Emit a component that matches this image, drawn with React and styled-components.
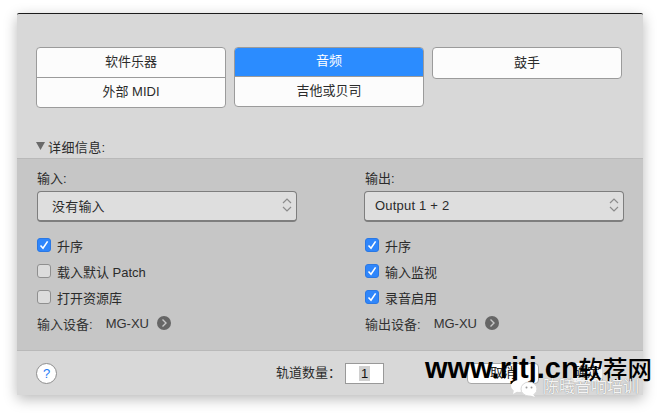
import React from 'react'
import styled, { createGlobalStyle } from 'styled-components'

const Global = createGlobalStyle`
  html, body { margin: 0; padding: 0; background: #fff; width: 660px; height: 416px; overflow: hidden; }
  * { box-sizing: border-box; }
  body { font-family: "Liberation Sans", "Noto Sans CJK SC", sans-serif; font-size: 13px; color: #2b2b2b; }
`

const Page = styled.div`
  width: 660px;
  height: 416px;
  padding: 13px 17px 21px;
`
const Win = styled.div`
  position: relative;
  width: 626px;
  height: 382px;
  display: flex;
  flex-direction: column;
  background: #d8d8d8;
  border-top: 1px solid #1c1c1c;
  border-radius: 2px;
  box-shadow: 0 4px 14px rgba(0, 0, 0, 0.28);
`
const Top = styled.div`
  height: 144px;
  padding: 33px 19px 0;
  display: flex;
  flex-direction: column;
  justify-content: space-between;
`
const Grid = styled.div`
  display: grid;
  grid-template-columns: repeat(3, 190px);
  gap: 8px;
  align-items: start;
`
const Group = styled.div`
  display: flex;
  flex-direction: column;
  background: #fcfcfc;
  border: 1px solid #9b9b9b;
  border-radius: 4px;
  overflow: hidden;
`
const Tile = styled.div`
  height: ${p => p.$h || 30}px;
  padding-bottom: 2px;
  display: flex;
  align-items: center;
  justify-content: center;
  line-height: 1;
  background: ${p => (p.$active ? '#2b8cff' : 'transparent')};
  color: ${p => (p.$active ? '#fff' : '#2b2b2b')};
  border-bottom: ${p => (p.$line ? '1px solid #9b9b9b' : 'none')};
  margin: ${p => (p.$active ? '-1px -1px 0' : '0')};
`
const Disclosure = styled.div`
  display: flex;
  align-items: center;
  gap: 3px;
  height: 18px;
  margin-bottom: 3px;
  letter-spacing: 0.4px;
`
const Detail = styled.div`
  height: 192px;
  background: #c6c6c6;
  border-top: 1px solid #b9b9b9;
  padding: 10px 19px 0 20px;
  display: grid;
  grid-template-columns: 260px 260px;
  column-gap: 68px;
`
const Col = styled.div`
  display: flex;
  flex-direction: column;
`
const Label = styled.div`
  height: 19px;
  line-height: 19px;
`
const Select = styled.div`
  width: 260px;
  height: 31px;
  margin-top: 3px;
  margin-bottom: 10px;
  margin-left: ${p => p.$shift || 0}px;
  padding: 0 2px 2px ${p => p.$pad}px;
  display: flex;
  align-items: center;
  justify-content: space-between;
  background: #dedede;
  border: 1px solid #7e7e7e;
  border-bottom-width: 2px;
  border-radius: 4px;
  letter-spacing: 0.2px;
`
const Check = styled.label`
  height: 26px;
  display: flex;
  align-items: center;
  gap: 6px;
`
const Box = styled.span`
  width: 14px;
  height: 14px;
  border-radius: 3px;
  display: flex;
  align-items: center;
  justify-content: center;
  background: ${p => (p.$on ? '#2f86fb' : '#dcdcdc')};
  border: 1px solid ${p => (p.$on ? '#2a78e4' : '#8f8f8f')};
`
const Device = styled.div`
  height: 26px;
  display: flex;
  align-items: center;
  color: #333;
`
const DeviceName = styled.span`
  margin-left: 13px;
  margin-right: 8px;
`
const Arrow = styled.span`
  width: 14px;
  height: 14px;
  border-radius: 50%;
  background: #666;
  display: flex;
  align-items: center;
  justify-content: center;
`
const Footer = styled.div`
  flex: 1;
  background: #d8d8d8;
  border-top: 1px solid #b9b9b9;
  padding: 12px 0 0 19px;
  display: flex;
  align-items: flex-start;
`
const Help = styled.div`
  width: 21px;
  height: 21px;
  border-radius: 50%;
  background: #fff;
  border: 1px solid #8e8e8e;
  color: #1f7cf5;
  display: flex;
  align-items: center;
  justify-content: center;
  font-size: 13px;
  margin-right: 219px;
`
const CountLabel = styled.div`
  line-height: 20px;
  margin-right: 13px;
  width: 56px;
  white-space: nowrap;
`
const Count = styled.div`
  width: 39px;
  height: 21px;
  background: #fff;
  border: 1px solid #999;
  display: flex;
  align-items: center;
  justify-content: center;
  margin-right: 83px;
  color: #111;
`
const Selected = styled.span`
  background: #d0d0d0;
  padding: 0 2px;
  line-height: 15px;
`
const FootButton = styled.div`
  width: 72px;
  height: 21px;
  background: #fff;
  color: #222;
  border-radius: 4px;
  border: 1px solid #a8a8a8;
  display: flex;
  align-items: center;
  justify-content: center;
  line-height: 1;
  padding-bottom: 2px;
`
const FootText = styled.div`
  margin-left: 33px;
  width: 30px;
  height: 19px;
  background: #f4f4f4;
  color: #222;
  display: flex;
  align-items: center;
  justify-content: center;
  line-height: 1;
  padding-bottom: 2px;
`
const Mark = styled.div`
  position: absolute;
  left: 408px;
  top: 336px;
  display: flex;
  align-items: baseline;
  font-size: 29px;
  line-height: 36px;
  font-weight: 700;
  color: #000;
  white-space: nowrap;
`
const MarkCjk = styled.span`
  font-size: 24.5px;
  font-weight: 500;
  position: relative;
  top: 1px;
`
const Caption = styled.div`
  position: absolute;
  left: 526px;
  top: 363px;
  font-size: 16px;
  line-height: 20px;
  color: #f4f4f4;
  white-space: nowrap;
  text-shadow: 0 0 1px #777;
`
const Wechat = styled.svg`
  position: absolute;
  left: 493px;
  top: 365px;
`

const Chevrons = () => (
  <svg width="14" height="18" viewBox="0 0 14 18" fill="none" stroke="#8c8c8c" strokeWidth="1.2">
    <path d="M3 7 L7 3 L11 7" />
    <path d="M3 11 L7 15 L11 11" />
  </svg>
)

const Tick = () => (
  <svg width="10" height="10" viewBox="0 0 10 10" fill="none" stroke="#fff" strokeWidth="1.6">
    <path d="M1.5 5.5 L4 8.2 L8.6 1.4" />
  </svg>
)

const Option = ({ on, children }) => (
  <Check>
    <Box $on={on}>{on && <Tick />}</Box>
    {children}
  </Check>
)

const Dev = ({ label }) => (
  <Device>
    {label}:<DeviceName>MG-XU</DeviceName>
    <Arrow>
      <svg width="8" height="10" viewBox="0 0 8 10" fill="none" stroke="#c8c8c8" strokeWidth="1.4">
        <path d="M2.5 1.5 L6 5 L2.5 8.5" />
      </svg>
    </Arrow>
  </Device>
)

export default function App() {
  return (
    <Page>
      <Global />
      <Win>
        <Top>
          <Grid>
            <Group>
              <Tile $line>软件乐器</Tile>
              <Tile $h={29}>外部 MIDI</Tile>
            </Group>
            <Group>
              <Tile $line $active>音频</Tile>
              <Tile $h={29}>吉他或贝司</Tile>
            </Group>
            <Group>
              <Tile>鼓手</Tile>
            </Group>
          </Grid>
          <Disclosure>
            <svg width="9" height="8" viewBox="0 0 9 8"><path d="M0 0 H9 L4.5 8 Z" fill="#6a6a6a" /></svg>
            详细信息:
          </Disclosure>
        </Top>
        <Detail>
          <Col>
            <Label>输入:</Label>
            <Select $pad={14}>没有输入<Chevrons /></Select>
            <Option on>升序</Option>
            <Option>载入默认 Patch</Option>
            <Option>打开资源库</Option>
            <Dev label="输入设备" />
          </Col>
          <Col>
            <Label>输出:</Label>
            <Select $pad={10} $shift={-1}>Output 1 + 2<Chevrons /></Select>
            <Option on>升序</Option>
            <Option on>输入监视</Option>
            <Option on>录音启用</Option>
            <Dev label="输出设备" />
          </Col>
        </Detail>
        <Footer>
          <Help>?</Help>
          <CountLabel>轨道数量：</CountLabel>
          <Count><Selected>1</Selected></Count>
          <FootButton>取消</FootButton>
          <FootText>确定</FootText>
        </Footer>
        <Mark>www.rjtj.cn<MarkCjk>软荐网</MarkCjk></Mark>
        <Wechat width="28" height="18" viewBox="0 0 28 18" fill="#fff">
          <ellipse cx="9" cy="7" rx="8" ry="6" />
          <path d="M4 11 L3 15 L8 12 Z" />
          <ellipse cx="19" cy="10" rx="8" ry="7" stroke="#d8d8d8" strokeWidth="1" />
          <path d="M23 15 L25 18 L19 16 Z" />
          <circle cx="16.5" cy="8.5" r="1" fill="#9a9a9a" />
          <circle cx="21.5" cy="8.5" r="1" fill="#9a9a9a" />
        </Wechat>
        <Caption>陈曦音响培训</Caption>
      </Win>
    </Page>
  )
}
